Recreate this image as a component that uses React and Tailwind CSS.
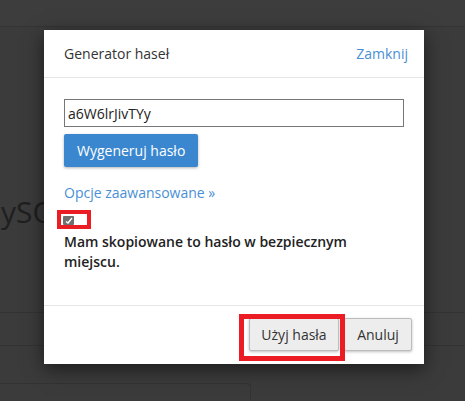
import React from 'react';

const font = { fontFamily: '"Open Sans", "Liberation Sans", sans-serif' };

export default function App() {
  return (
    <div className="relative w-[465px] h-[401px] overflow-hidden bg-[#3b3b3b]" style={font}>
      {/* page behind the overlay */}
      <div className="h-[27px] bg-[#3d3d3d] border-b border-[#343434]" />
      <div className="h-[167px]" />
      <div className="ml-[-26px] text-[30px] leading-[36px] text-[#1f1f1f]">MySQL</div>
      <div className="h-[82px]" />
      <div className="border-t border-[#333333] h-[33px]" />
      <div className="border-t border-[#333333] h-[38px]" />
      <div className="w-[251px] h-[20px] border-t border-r border-[#333333] rounded-tr-[4px]" />

      {/* modal */}
      <div className="absolute left-[44px] top-[30px] w-[380px] h-[334px] bg-white flex flex-col shadow-[0_5px_18px_rgba(0,0,0,0.55)]">
        <div className="h-[48px] flex items-center justify-between pl-[20px] pr-[16px] border-b border-[#e5e5e5]">
          <span className="text-[14px] text-[#333]">Generator haseł</span>
          <a className="text-[14px] text-[#4a8fd6] cursor-pointer">Zamknij</a>
        </div>
        <div className="flex-1 px-[20px] pt-[21px]">
          <input
            readOnly
            value="a6W6lrJivTYy"
            className="block w-[340px] h-[28px] border border-[#767676] px-[3px] text-[14px] text-[#222] outline-none"
            style={font}
          />
          <button className="mt-[7px] h-[33px] px-[13px] bg-[#3a87d0] text-white text-[14px] rounded-[2px] shadow-[0_1px_3px_rgba(0,0,0,0.3)]">
            Wygeneruj hasło
          </button>
          <div className="mt-[16px] h-[20px] leading-[20px] text-[14px] text-[#4a8fd6]">Opcje zaawansowane »</div>
          <div className="mt-[9px] h-[16px] flex items-center">
            <div className="w-[11px] h-[9px] ml-[-1px] rounded-[1px] bg-[#6f6f6f] flex items-center justify-center">
              <svg width="8" height="7" viewBox="0 0 8 7">
                <path d="M1 4.5 L3 6 L7 1" stroke="white" strokeWidth="1.4" fill="none" />
              </svg>
            </div>
          </div>
          <p className="mt-[4px] text-[14px] leading-[20px] font-semibold text-[#222]">
            Mam skopiowane to hasło w bezpiecznym miejscu.
          </p>
        </div>
        <div className="h-[59px] border-t border-[#e5e5e5] flex justify-end items-start pt-[12px] pr-[12px] gap-[5px]">
          <button className="h-[33px] w-[90px] bg-[#ededed] border border-[#bcbcbc] rounded-[2px] text-[14px] text-[#333] shadow-[0_1px_3px_rgba(0,0,0,0.25)]">
            Użyj hasła
          </button>
          <button className="h-[33px] w-[68px] bg-[#ededed] border border-[#bcbcbc] rounded-[2px] text-[14px] text-[#333] shadow-[0_1px_3px_rgba(0,0,0,0.25)]">
            Anuluj
          </button>
        </div>
      </div>

      {/* highlight marks */}
      <div className="absolute left-[57px] top-[210px] w-[34px] h-[19px] border-4 border-[#ec1c24]" />
      <div className="absolute left-[239px] top-[314px] w-[106px] h-[47px] border-[5px] border-[#ec1c24]" />
    </div>
  );
}
